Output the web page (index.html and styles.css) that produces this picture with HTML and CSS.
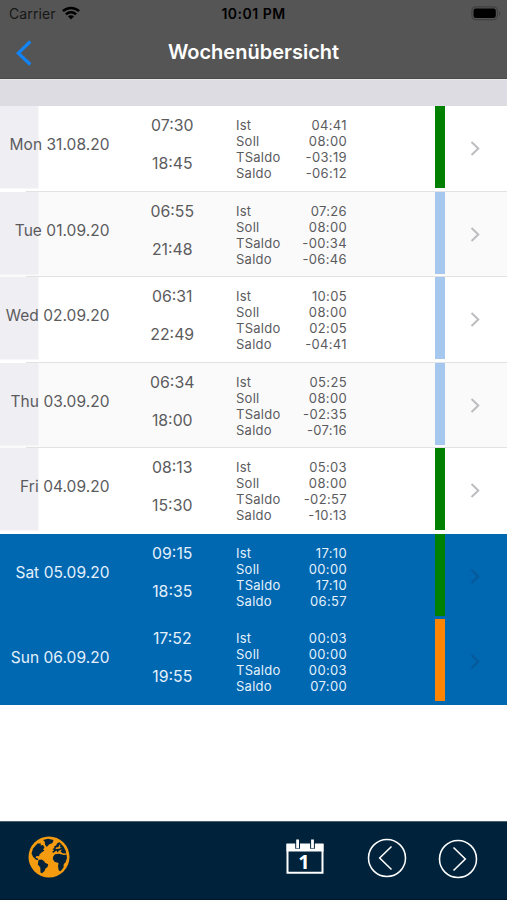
FILE: index.html
```html
<!DOCTYPE html>
<html lang="de">
<head>
<meta charset="utf-8">
<title>Wochenübersicht</title>
<link rel="stylesheet" href="styles.css">
</head>
<body>
<div class="screen">
  <header class="top">
    <div class="status">
      <div class="carrier"><span>Carrier</span>
        <svg class="wifi" width="18" height="14" viewBox="0 0 18 14"><g fill="none" stroke="#000" stroke-width="2.5"><path d="M.9 5.2C5.400.9 12.600.9 17.100 5.200"/><path d="M3.900 8.400C6.800 5.600 11.200 5.600 14.100 8.400"/></g><path d="M5.900 10.300C7.700 8.800 10.300 8.800 12.100 10.300L9 13.400Z"/></svg>
      </div>
      <div class="clock">10:01 PM</div>
      <svg class="battery" width="31" height="15" viewBox="0 0 31 15"><rect x=".9" y=".9" width="25.500" height="12.700" rx="3.800" fill="none" stroke="#404040" stroke-width="1.200"/><rect x="2.500" y="2.500" width="22.300" height="9.500" rx="2.300"/><path d="M28 5v5c1.800-.8 1.800-4.200 0-5Z" fill="#404040"/></svg>
    </div>
    <div class="nav">
      <svg class="back" width="18" height="28" viewBox="0 0 18 28"><path d="M15.300 2.500 3.300 14.200l12 11.300" fill="none" stroke="#1284f5" stroke-width="3.200"/></svg>
      <h1>Wochenübersicht</h1>
    </div>
  </header>
  <div class="section"></div>
  <main id="week"></main>
  <footer class="tools">
    <svg class="globe" width="42" height="42" viewBox="0 0 42 42"><circle cx="21" cy="21" r="20.500" fill="#f49b0f"/><g fill="#00233b"><path d="M15 4 L20 2.800 L25.500 4 L24.500 7 L21 8.500 L18.800 11 L17 8.500 L16.700 5.500 Z"/><path d="M9.500 7.500 L13 7.500 L12.500 9.500 L15 9 L16.500 11.500 L15 13.500 L16.500 14.500 L13.500 16.500 L11.500 18.500 L11 20.300 L8.500 20 L7.500 22 L9.500 22.300 L10.500 24 L8 23.700 L5.200 21 L3.500 17.500 L5 12.500 Z"/><path d="M10.500 24 L13.500 23.500 L16 25 L17 26.800 L20.200 28.200 L19.500 31 L17.500 32.500 L16.500 35 L14 37.300 L12.500 36.500 L12.300 31.500 L9.800 28.500 Z"/><path d="M27 18.300 L31 17.700 L36 19 L38.500 18.500 L39 22 L37.500 26.500 L35.800 28 L35.500 31.500 L32.500 35.300 L30.800 34.500 L30 30.500 L30.500 27 L26.500 25.800 L24.800 23 L25.200 20.500 Z"/><path d="M24.500 13 L26.500 12 L26 10.500 L28 9.500 L29.500 7 L31.500 6.300 L35.500 10.500 L37.800 15 L38.200 17.500 L34.500 17.200 L32.500 15.500 L34 13.500 L31 14.500 L29.500 16.500 L28.500 14.500 L25.500 16.800 L24 16 L26 14.300 Z"/></g><path d="M28 11.500 L30.500 11 L31.500 8.500 L32.500 9 L31.700 11.200 L34 11.500 L31 12.700 L27.500 13 Z" fill="#f49b0f"/></svg>
    <div class="calendar">
      <svg width="38" height="36" viewBox="0 0 38 36"><path d="M1.500 5.500h35v28.200h-35Z" fill="none" stroke="#fff" stroke-width="2"/><path d="M.5 5h37v7.500H.5Z" fill="#fff"/><path d="M9.200 0h4.800v9.800H9.200ZM24.100 0h4.800v9.800h-4.800Z" fill="#00233b"/><path d="M10.200.5h2.800v8.800h-2.800ZM25.100.5h2.800v8.800h-2.800Z" fill="#fff"/></svg>
      <span>1</span>
    </div>
    <svg class="prev" width="40" height="40" viewBox="0 0 40 40"><g fill="none" stroke="#fff" stroke-width="1.550"><circle cx="20" cy="20" r="18.500"/><path d="M24.500 8.500 12.700 20l11.800 11.500"/></g></svg>
    <svg class="next" width="40" height="40" viewBox="0 0 40 40"><g fill="none" stroke="#fff" stroke-width="1.550"><circle cx="20" cy="20" r="18.500"/><path d="m15.500 8.500 11.800 11.500-11.800 11.500"/></g></svg>
  </footer>
</div>
<script src="week.js"></script>
</body>
</html>
```
FILE: styles.css
```css
* { box-sizing: border-box; }
body { margin: 0; background: #fff; font-family: Inter, "Liberation Sans", sans-serif; }
svg { display: block; }
.screen { width: 507px; height: 900px; display: flex; flex-direction: column; overflow: hidden; }
.top { height: 79px; flex: none; background: #555; border-bottom: 1px solid #4b4b4b; }
.status { height: 27px; display: grid; grid-template-columns: 1fr auto 1fr; align-items: center; color: #000; font-size: 14px; line-height: 27px; }
.carrier { display: flex; align-items: center; gap: 6px; padding-left: 9px; color: #171717; letter-spacing: .1px; }
.wifi { margin-top: -1px; }
.clock { font-weight: 600; font-size: 14px; letter-spacing: .5px; }
.battery { justify-self: end; margin-right: 5px; }
.nav { height: 51px; display: grid; grid-template-columns: 80px 1fr 80px; align-items: center; }
.back { margin-left: 15px; }
h1 { margin: 0; color: #fff; font-size: 20px; font-weight: 600; text-align: center; line-height: 51px; letter-spacing: 0; }
.section { height: 27px; flex: none; background: #dddce2; border-top: 1px solid #e7e6ea; }
.day { position: relative; height: 85.500px; display: grid; grid-template-columns: 109.500px 125.500px 112px 87.500px 10px 1fr; color: #5b5b5e; background: linear-gradient(#efeef3, #efeef3) 0 0 / 38.500px 82.500px no-repeat #fff; }
.day.alt { background-color: #fafafa; }
.day::after { content: ""; position: absolute; left: 26px; right: 0; bottom: 0; height: 1px; background: #e2e2e4; }
.day.weekend { color: #e4f1fc; background: #0067b1; }
.day.weekend::after, .day.last::after { display: none; }
.date { height: 78px; line-height: 78px; text-align: right; font-size: 15.500px; letter-spacing: .04px; white-space: nowrap; }
.times { display: flex; flex-direction: column; align-items: center; padding-top: 1.400px; font-size: 15.800px; line-height: 38px; }
.stats { margin: 0; padding: 11px 0 0 1px; display: grid; grid-template-columns: 1fr auto; grid-auto-rows: 16px; font-size: 13px; line-height: 16px; letter-spacing: .25px; }
.stats dt, .stats dd { margin: 0; }
.stats dd { text-align: right; letter-spacing: .35px; }
.bar { grid-column: 5; height: 82px; }
.green { background: #008000; }
.light { background: #a6c8ee; }
.orange { background: #ff8500; }
.go { margin: 34px 0 0 25.500px; }
.go path { fill: none; stroke: #bdbdc0; stroke-width: 2; }
.weekend .go path { stroke: #075998; }
.tools { height: 79.500px; margin-top: auto; flex: none; display: flex; background: #00233b; border-top: 1px solid #49606f; border-bottom: 1px solid #00182a; }
.globe { margin: 14px 0 0 28px; }
.calendar { position: relative; margin: 17px 0 0 215.500px; }
.calendar span { position: absolute; left: 0; width: 37px; top: 12px; text-align: center; color: #fff; font: 700 20px/22px "Open Sans", sans-serif; }
.prev { margin: 16px 0 0 43px; }
.next { margin: 17.500px 0 0 31px; }
```
FILE: week.js
```js
const week = [
  ["Mon 31.08.20", "07:30", "18:45", ["04:41", "08:00", "-03:19", "-06:12"], "green", ""],
  ["Tue 01.09.20", "06:55", "21:48", ["07:26", "08:00", "-00:34", "-06:46"], "light", "alt"],
  ["Wed 02.09.20", "06:31", "22:49", ["10:05", "08:00", "02:05", "-04:41"], "light", ""],
  ["Thu 03.09.20", "06:34", "18:00", ["05:25", "08:00", "-02:35", "-07:16"], "light", "alt"],
  ["Fri 04.09.20", "08:13", "15:30", ["05:03", "08:00", "-02:57", "-10:13"], "green", "last"],
  ["Sat 05.09.20", "09:15", "18:35", ["17:10", "00:00", "17:10", "06:57"], "green", "weekend"],
  ["Sun 06.09.20", "17:52", "19:55", ["00:03", "00:00", "00:03", "07:00"], "orange", "weekend"]
];
const labels = ["Ist", "Soll", "TSaldo", "Saldo"];

document.getElementById("week").innerHTML = week.map(([date, start, end, values, color, kind]) => `
  <section class="day ${kind}">
    <div class="date">${date}</div>
    <div class="times"><span>${start}</span><span>${end}</span></div>
    <dl class="stats">${labels.map((label, i) => `<dt>${label}</dt><dd>${values[i]}</dd>`).join("")}</dl>
    <div class="bar ${color}"></div>
    <svg class="go" width="12" height="17" viewBox="0 0 12 17"><path d="m1.500 2 6.800 6.500-6.800 6.500"/></svg>
  </section>`).join("");
```
